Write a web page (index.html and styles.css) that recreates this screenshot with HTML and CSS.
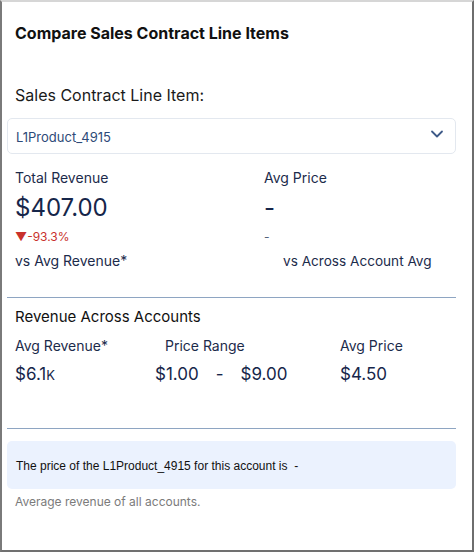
FILE: index.html
```html
<!DOCTYPE html>
<html lang="en">
<head>
  <meta charset="UTF-8">
  <meta name="viewport" content="width=device-width, initial-scale=1.0">
  <title>Compare Sales Contract Line Items</title>
  <link rel="stylesheet" href="styles.css">
</head>
<body>

  <div class="card">
    <h1 class="title">Compare Sales Contract Line Items</h1>

    <label class="label" for="item">Sales Contract Line Item:</label>
    <div class="select">
      <span id="item">L1Product_4915</span>
      <svg class="chevron" width="14" height="14" viewBox="0 0 14 14">
        <path d="M2 4.5 L7 9.5 L12 4.5" fill="none" stroke="#3e5a88" stroke-width="1.8" stroke-linecap="round" stroke-linejoin="round"/>
      </svg>
    </div>

    <div class="stats">
      <div class="stat">
        <div class="stat-label">Total Revenue</div>
        <div class="stat-value">$407.00</div>
        <div class="change down">&#9660;-93.3%</div>
        <div class="stat-label">vs Avg Revenue*</div>
      </div>
      <div class="stat">
        <div class="stat-label">Avg Price</div>
        <div class="stat-value">-</div>
        <div class="change">-</div>
        <div class="stat-label shift">vs Across Account Avg</div>
      </div>
    </div>

    <div class="section">
      <h2 class="section-title">Revenue Across Accounts</h2>
      <div class="row">
        <div class="col col-avg">
          <div class="stat-label">Avg Revenue*</div>
          <div class="small-value">$6.1<span class="k">K</span></div>
        </div>
        <div class="col col-range">
          <div class="stat-label head">Price Range</div>
          <div class="small-value range"><span>$1.00</span><span>-</span><span>$9.00</span></div>
        </div>
        <div class="col col-price">
          <div class="stat-label">Avg Price</div>
          <div class="small-value">$4.50</div>
        </div>
      </div>
    </div>

    <div class="note">The price of the L1Product_4915 for this account is&nbsp; -</div>
    <p class="foot">Average revenue of all accounts.</p>
  </div>

</body>
</html>
```

FILE: styles.css
```css
* {
  margin: 0;
  padding: 0;
  box-sizing: border-box;
  font-family: Inter, "Liberation Sans", sans-serif;
}

body {
  background: #ffffff;
}

.card {
  width: 474px;
  height: 552px;
  border-left: 2px solid #7a7a7a;
  border-top: 2px solid #d6d6d6;
  border-right: 2px solid #6e6e6e;
  border-bottom: 2px solid #707070;
  padding: 20px 16px 0 5px;
  color: #1c2b4b;
}

.title {
  font-size: 16px;
  font-weight: 700;
  color: #111;
  margin-left: 8px;
  line-height: 22px;
}

.label {
  display: block;
  margin: 41px 0 0 8px;
  font-size: 16px;
  color: #1a1a1a;
  line-height: 20px;
}

.select {
  margin-top: 13px;
  height: 36px;
  border: 1px solid #e3e8ef;
  border-radius: 5px;
  display: flex;
  align-items: center;
  justify-content: space-between;
  padding: 2px 11px 0 8px;
  font-size: 13px;
  color: #2e4a78;
}

.chevron {
  margin-top: -6px;
}

.stats {
  display: grid;
  grid-template-columns: 249px 1fr;
  padding: 15px 0 0 8px;
}

.stat-label {
  font-size: 14px;
  line-height: 18px;
  color: #1c2b4b;
}

.shift {
  margin-left: 19px;
  font-size: 13.6px;
}

.stat-value {
  font-size: 24px;
  line-height: 30px;
  margin-top: 6px;
  color: #16264a;
}

.change {
  font-size: 12px;
  color: #53627a;
  line-height: 16px;
  margin: 6px 0 7px;
}

.change.down {
  color: #c9312c;
}

.section {
  margin-top: 27px;
  border-top: 1px solid #8ea5c2;
  border-bottom: 1px solid #8ea5c2;
  padding: 10px 0 42px 8px;
}

.section-title {
  font-size: 15px;
  font-weight: 400;
  color: #111;
  line-height: 18px;
}

.row {
  display: flex;
  margin-top: 11px;
}

.col-avg {
  width: 140px;
}

.col-range {
  width: 185px;
}

.head {
  margin-left: 10px;
}

.small-value {
  font-size: 17px;
  line-height: 22px;
  margin-top: 8px;
  color: #16264a;
}

.k {
  font-size: 13px;
}

.range {
  display: flex;
  gap: 17px;
}

.note {
  margin-top: 12px;
  background: #ebf2fe;
  border-radius: 5px;
  height: 48px;
  display: flex;
  align-items: center;
  padding: 2px 9px 0;
  font-family: "Liberation Sans", Arial, sans-serif;
  font-size: 12px;
  color: #111;
}

.foot {
  margin: 5px 0 0 8px;
  font-size: 12px;
  color: #7b7b7b;
}
```
